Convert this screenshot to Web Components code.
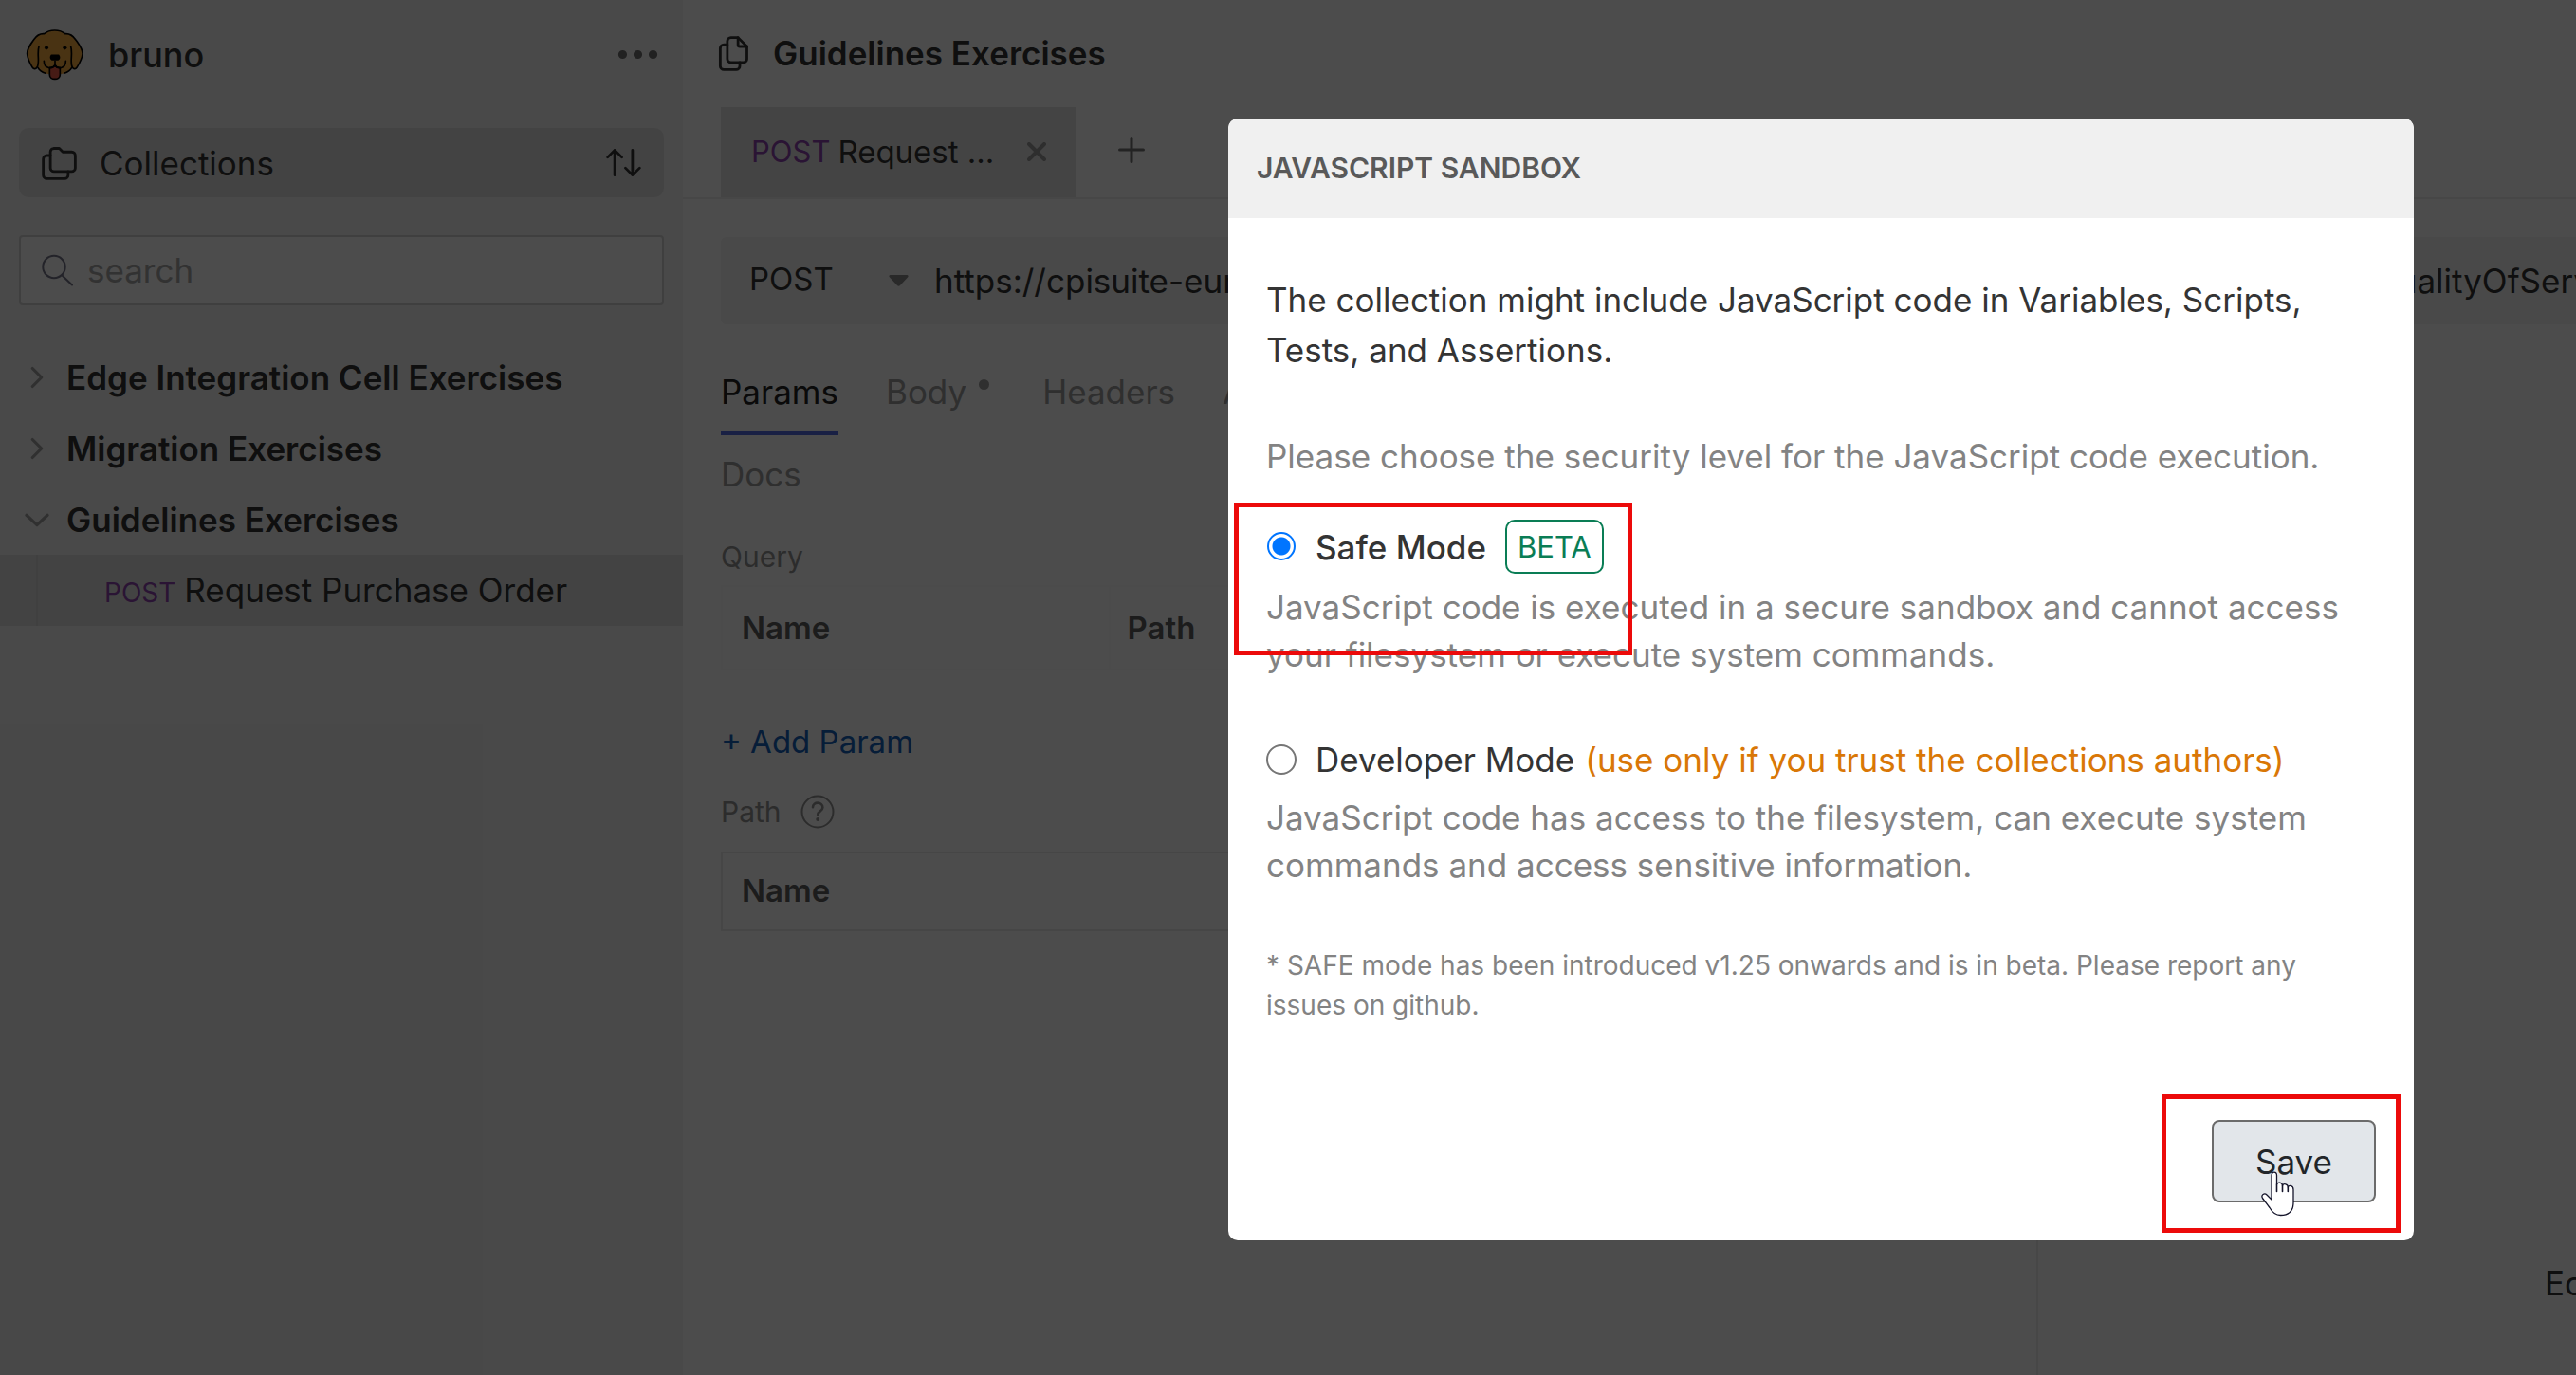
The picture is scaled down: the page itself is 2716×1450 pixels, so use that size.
<!DOCTYPE html>
<html lang="en">
<head>
<meta charset="utf-8">
<title>Bruno</title>
<style>
html, body { margin: 0; height: 100%; overflow: hidden; }
body { font: 400 35px/50px Inter, "Liberation Sans", sans-serif; color: #343434; background: #fff; }
</style>
</head>
<body>
<bruno-app></bruno-app>
<script>
const BASE = `*{box-sizing:border-box}svg{display:block;flex:none}
button,input,select{font:inherit;color:inherit;background:none;border:0;padding:0;margin:0;outline:0}`;
const define = (name, css, html) => customElements.define(name, class extends HTMLElement {
  constructor() {
    super();
    this.attachShadow({ mode: 'open' }).innerHTML = '<style>' + BASE + css + '</style>' + html;
  }
});

/* Small stroke icons, chosen by the name attribute */
const ICONS = {
  folders: [45, 45, '0 0 24 24', 1.5, '<path d="M9 4h3l2 2h5a2 2 0 0 1 2 2v7a2 2 0 0 1 -2 2h-10a2 2 0 0 1 -2 -2v-9a2 2 0 0 1 2 -2"/><path d="M17 17v2a2 2 0 0 1 -2 2h-10a2 2 0 0 1 -2 -2v-9a2 2 0 0 1 2 -2h2"/>'],
  sort: [45, 45, '0 0 24 24', 1.5, '<path d="M3 9l4 -4l4 4m-4 -4v14"/><path d="M21 15l-4 4l-4 -4m4 4v-14"/>'],
  files: [45, 45, '0 0 24 24', 1.5, '<path d="M15 3v4a1 1 0 0 0 1 1h4"/><path d="M18 17h-7a2 2 0 0 1 -2 -2v-10a2 2 0 0 1 2 -2h4l5 5v7a2 2 0 0 1 -2 2z"/><path d="M16 17v2a2 2 0 0 1 -2 2h-7a2 2 0 0 1 -2 -2v-10a2 2 0 0 1 2 -2h2"/>'],
  dots: [55, 55, '0 0 24 24', 2, '<circle cx="5" cy="12" r="1"/><circle cx="12" cy="12" r="1"/><circle cx="19" cy="12" r="1"/>'],
  search: [34, 34, '0 0 34 34', 2, '<circle cx="13" cy="13.5" r="11.7"/><path d="M21.5 22.5l10.5 10"/>'],
  right: [38, 38, '0 0 24 24', 2, '<path d="M9 6l6 6l-6 6"/>'],
  down: [38, 38, '0 0 24 24', 2, '<path d="M5 9l7 6.500l7 -6.500"/>'],
  close: [20, 20, '0 0 20 20', 4, '<path d="M2 2l16 16M18 2l-16 16"/>'],
  plus: [28, 28, '0 0 28 28', 3, '<path d="M14 1.500v25M1.500 14h25"/>'],
  help: [36, 36, '0 0 36 36', 2, '<circle cx="18" cy="18" r="16.5"/><path stroke-width="2.600" d="M13 13.200c0-6.200 10.400-6 10.400 .3c0 4-5.200 3.800-5.200 7.800"/><circle cx="18.200" cy="26" r="1" />']
};
customElements.define('app-icon', class extends HTMLElement {
  constructor() { super(); this.attachShadow({ mode: 'open' }); }
  connectedCallback() {
    const [w, h, box, sw, body] = ICONS[this.getAttribute('name')];
    this.shadowRoot.innerHTML = '<style>:host{display:block;flex:none}svg{display:block}</style><svg width="' + w + '" height="' + h + '" viewBox="' + box + '" fill="none" stroke="currentColor" stroke-width="' + sw + '" stroke-linecap="round" stroke-linejoin="round" aria-hidden="true">' + body + '</svg>';
  }
});

define('bruno-logo', ':host{display:block;flex:none}', `
<svg width="61" height="55" viewBox="50 60 183 165" fill="none" stroke="#000" stroke-width="5" stroke-linecap="round" stroke-linejoin="round" role="img" aria-label="Bruno">
<path stroke="none" fill="#f4aa41" d="M142 66c-14 0-25 4-33 11c-12-1-24 5-33 18c-12 17-22 30-21 46c1 13 10 30 18 43c4 6 10 5 16-2c6 12 20 21 33 22h40c13-1 27-10 33-22c6 7 12 8 16 2c8-13 17-30 18-43c1-16-9-29-21-46c-9-13-21-19-33-18c-8-7-19-11-33-11z"/>
<path d="M109 77c8-7 19-11 33-11s25 4 33 11c12-1 24 5 33 18c12 17 23 30 22 46c-1 13-10 30-18 43c-4 6-10 5-14-1c-9-14 2-42-5-66M109 77c-12-1-24 5-33 18c-12 17-22 30-21 46c1 13 9 30 17 43c4 6 10 5 14-1c10-14-1-42 6-66"/>
<path d="M89 184c5 9 13 14 24 18M196 184c-5 9-13 14-24 18"/>
<path fill="#ea5a47" d="M126 184v22c0 19 33 19 33 0v-22c-6 1-13-2-16-7c-4 5-10 8-17 7z"/>
<path d="M108 163c0 26 28 27 35 12c7 15 34 14 34-12M143 163v13"/>
<path fill="#000" d="M132 145h22c4 6 4 10-2 14h-18c-6-4-6-8-2-14z"/>
<circle cx="116" cy="121" r="5" fill="#000" stroke-width="2"/><circle cx="174" cy="121" r="5" fill="#000" stroke-width="2"/>
</svg>`);

/* Collection row of the sidebar tree; the open attribute turns the chevron down */
customElements.define('tree-row', class extends HTMLElement {
  constructor() { super(); this.attachShadow({ mode: 'open' }); }
  connectedCallback() {
    this.shadowRoot.innerHTML = '<style>' + BASE + `
:host{display:flex;align-items:center;height:75px;padding-left:20px;gap:12px;font-weight:600;white-space:nowrap}
app-icon{color:#a0a0a0}` + '</style><app-icon name="' + (this.hasAttribute('open') ? 'down' : 'right') + '"></app-icon><span><slot></slot></span>';
  }
});

define('request-row', `
:host{display:flex;height:75px;background:#e1e1e1;white-space:nowrap;padding-left:38px}
div{flex:1;display:flex;align-items:baseline;gap:9px;padding-left:70px;border-left:2px solid #d8d8d8;line-height:75px}
b{font-weight:400;font-size:28px;color:#8e44ad}`, '<div><b>POST</b><span><slot></slot></span></div>');

define('side-bar', `
:host{display:block;flex:0 0 720px;background:#f3f3f3;padding-top:30px}
header{display:flex;align-items:center;gap:26px;padding:0 20px 0 27px;height:55px;font-size:36px;font-weight:500}
header app-icon{color:#6e6e6e}
button{display:block}header button{margin-left:auto}
.col{display:flex;align-items:center;gap:20px;height:73px;margin:50px 20px 0;padding:0 20px;background:#e1e1e1;border-radius:10px}
.col button{margin-left:auto}
.search{display:flex;align-items:center;gap:14px;height:74px;margin:40px 20px 38px;padding:0 22px;border:2px solid #d3d3d3;border-radius:4px;background:#fdfdfd}
.search app-icon{color:#75758a}
input{flex:1;min-width:0;height:60px}input::placeholder{color:#a8a8a8;opacity:1}`, `
<header><bruno-logo></bruno-logo><span>bruno</span><button aria-label="Menu"><app-icon name="dots"></app-icon></button></header>
<div class="col"><app-icon name="folders"></app-icon><span>Collections</span><button aria-label="Sort"><app-icon name="sort"></app-icon></button></div>
<label class="search"><app-icon name="search"></app-icon><input type="text" placeholder="search" aria-label="search"></label>
<nav>
<tree-row>Edge Integration Cell Exercises</tree-row>
<tree-row>Migration Exercises</tree-row>
<tree-row open>Guidelines Exercises</tree-row>
<request-row>Request Purchase Order</request-row>
</nav>`);

define('request-tabs', `
:host{display:flex;align-items:center;height:97px;padding-left:40px;border-bottom:2px solid #efefef}
.tab{display:flex;align-items:center;width:375px;height:95px;padding:0 32px 2px;background:#e5e5e5;font-size:33px;white-space:nowrap}
.tab b{font-weight:400;font-size:31px;color:#8e44ad;margin-right:8px}
.tab button{margin-left:auto;color:#999}
.add{margin-left:44px;padding-bottom:6px;color:#777}`, `
<div class="tab"><b>POST</b><span>Request ...</span><button aria-label="Close"><app-icon name="close"></app-icon></button></div>
<button class="add" aria-label="New request"><app-icon name="plus"></app-icon></button>`);

define('query-url', `
:host{display:flex;align-items:center;height:92px;margin:40px 0 0 40px;background:#f3f3f3;border-radius:6px 0 0 6px;overflow:hidden}
select{appearance:none;width:147px;height:60px;margin-left:30px;font-size:33px;line-height:50px;padding-bottom:4px}
svg{margin-right:27px}
input{flex:1;min-width:0;height:60px}
span{flex:0 0 215px;overflow:hidden;white-space:nowrap}`, `
<select aria-label="Method"><option>POST</option></select>
<svg width="21" height="12" viewBox="0 0 21 12" aria-hidden="true"><path d="M1.500 0h18q2 1 .5 2.500l-8 8.500q-1.500 1.500-3 0l-8-8.500q-1.500-1.500.5-2.500z" fill="#8a8a8a"/></svg>
<input type="text" value="https://cpisuite-eur" aria-label="URL"><span>QualityOfServi</span>`);

define('request-pane', `
:host{display:block;flex:0 0 71%;min-width:0;padding:45px 23px 0 0;border-right:2px solid #efefef}
nav{display:flex;flex-wrap:wrap;gap:15px 50px;max-width:1190px}
a{color:#9d9d9d;text-decoration:none;line-height:52px;padding-bottom:15px;border-bottom:5px solid transparent;display:flex;gap:11px}
a.on{color:#222;border-color:#546de5}
i{width:11px;height:11px;border-radius:50%;background:#9d9d9d;margin:13px 6px 0 2px}
.label{display:flex;align-items:center;gap:20px;height:36px;font-size:30px;color:#949494}
.q{margin-top:23px}.p{margin-top:36px}
table{width:100%;border-collapse:collapse;table-layout:fixed;font-size:33px;font-weight:600;color:#606060}
th{text-align:left;font-weight:600;padding:0 20px;border:2px solid #fcfcfc}
.t1{margin-top:12px}.t1 th{height:88px}.t1 th+th{padding-left:18px}
.t2{margin-top:24px}.t2 th{height:82px;padding-bottom:2px;border-color:#e9e9e9}
button{display:block;margin-top:55px;height:40px;line-height:40px;font-size:33px;color:#1663bb}`, `
<nav><a class="on" href="#params">Params</a><a href="#body">Body<i></i></a><a href="#headers">Headers</a><a href="#auth">Auth</a><a href="#vars">Vars</a><a href="#script">Script</a><a href="#assert">Assert</a><a href="#tests">Tests</a><a href="#docs">Docs</a></nav>
<div class="label q">Query</div>
<table class="t1"><colgroup><col style="width:30%"><col></colgroup><tr><th>Name</th><th>Path</th></tr></table>
<button>+ Add Param</button>
<div class="label p">Path<app-icon name="help"></app-icon></div>
<table class="t2"><tr><th>Name</th></tr></table>`);

define('response-pane', `
:host{display:flex;flex:1;min-width:0;overflow:hidden;justify-content:flex-end;align-items:flex-end;padding-bottom:72px}
span{flex:0 0 33px;min-width:0;line-height:50px;white-space:nowrap}`, '<span>Ed</span>');

define('main-panel', `
:host{flex:1;min-width:0;display:flex;flex-direction:column}
header{display:flex;align-items:center;gap:20px;height:112px;padding-left:30px;font-weight:600;flex:none;margin-bottom:1px}
.panes{flex:1;display:flex;padding-left:40px}`, `
<header><app-icon name="files"></app-icon><span>Guidelines Exercises</span></header>
<request-tabs></request-tabs>
<query-url></query-url>
<div class="panes"><request-pane></request-pane><response-pane></response-pane></div>`);

/* One selectable security level: radio, title, optional extras and a description */
customElements.define('mode-option', class extends HTMLElement {
  constructor() {
    super();
    this.attachShadow({ mode: 'open' }).innerHTML = '<style>' + BASE + `
:host{display:block}
label{display:flex;align-items:center;height:var(--row,50px)}
input{appearance:none;width:32px;height:32px;border:2px solid #767676;border-radius:50%;margin-right:20px;flex:none}
input:checked{width:30px;height:30px;margin:0 21px 2px 1px;border:2px solid #0075ff;background:radial-gradient(circle,#0075ff 9px,#fff 10px)}
p{margin:var(--gap,10px) 0 0;color:#838383}` + '</style><label><input type="radio" name="mode"><slot name="title"></slot></label><p><slot></slot></p>';
  }
  connectedCallback() { this.shadowRoot.querySelector('input').checked = this.hasAttribute('checked'); }
});

define('mark-frame', ':host{position:absolute;border:5px solid #ec0a0a;pointer-events:none}', '');

define('hand-cursor', ':host{position:absolute;pointer-events:none}', `
<svg width="36" height="48" viewBox="0 0 36 48" fill="#fff" stroke="#15152b" stroke-width="1.300" stroke-linejoin="round" stroke-linecap="round" aria-hidden="true">
<path d="M11 27V4.500c0-4.500 5.500-4.500 5.500 0V14c1-3 6-2.500 6 1.500c1-3 5.800-2 5.800 1.500c1-2.500 5.700-2 5.700 2.500V33c0 9-5 13.500-13.500 13.500c-6 0-9-3.500-11.500-8L1.500 28.500c-2-3.500 2-6 4.500-3.500l5 5z"/>
<path d="M16.500 14v7.500M22.500 15.500v6M28.300 17v4.500" fill="none" stroke-width="1.600"/>
</svg>`);

define('sandbox-modal', `
:host{display:block;position:relative;width:1250px;background:#fff;border-radius:10px;overflow:hidden}
header{height:105px;padding:0 30px;background:#f0f0f0;color:#595959;font-size:30px;font-weight:600;line-height:104px}
section{padding:60px 40px 0}
p{margin:0}
.intro{line-height:53px}.ask{line-height:53px;margin:59px 0 40px;color:#838383}
.safe{--row:57px}.dev{margin-top:61px;--gap:11px}
b{font-weight:500}
.beta{display:inline-block;height:57px;line-height:53px;padding:0 11px;border:2px solid #0a7d55;border-radius:10px;color:#0a7d55;font-size:31px;margin-left:20px}
.warn{color:#d97706;margin-left:11px}
.note{margin-top:60px;font-size:28px;line-height:42px;color:#838383}
footer{display:flex;justify-content:flex-end;padding:100px 40px 40px}
footer button{width:173px;height:87px;border:2px solid #6b6b6b;border-radius:8px;background:#e2e6ea;color:#212529}
.m1{left:6px;top:405px;width:420px;height:161px}
.m2{right:14px;bottom:8px;width:252px;height:146px}
hand-cursor{right:125px;bottom:25px}`, `
<header>JAVASCRIPT SANDBOX</header>
<section>
<p class="intro">The collection might include JavaScript code in Variables, Scripts, Tests, and Assertions.</p>
<p class="ask">Please choose the security level for the JavaScript code execution.</p>
<mode-option class="safe" checked><b slot="title">Safe Mode</b><span slot="title" class="beta">BETA</span>JavaScript code is executed in a secure sandbox and cannot access your filesystem or execute system commands.</mode-option>
<mode-option class="dev"><span slot="title">Developer Mode</span><span slot="title" class="warn">(use only if you trust the collections authors)</span>JavaScript code has access to the filesystem, can execute system commands and access sensitive information.</mode-option>
<p class="note">* SAFE mode has been introduced v1.25 onwards and is in beta. Please report any issues on github.</p>
</section>
<footer><button>Save</button></footer>
<mark-frame class="m1"></mark-frame><mark-frame class="m2"></mark-frame><hand-cursor></hand-cursor>`);

define('bruno-app', `
:host{display:flex;height:100vh;position:relative;overflow:hidden}
.overlay{position:absolute;inset:0;display:flex;justify-content:flex-end;align-items:flex-start;padding:125px 171px 0 0;background:rgba(0,0,0,.7)}`, `
<side-bar></side-bar><main-panel></main-panel>
<div class="overlay"><sandbox-modal></sandbox-modal></div>`);
</script>
</body>
</html>
